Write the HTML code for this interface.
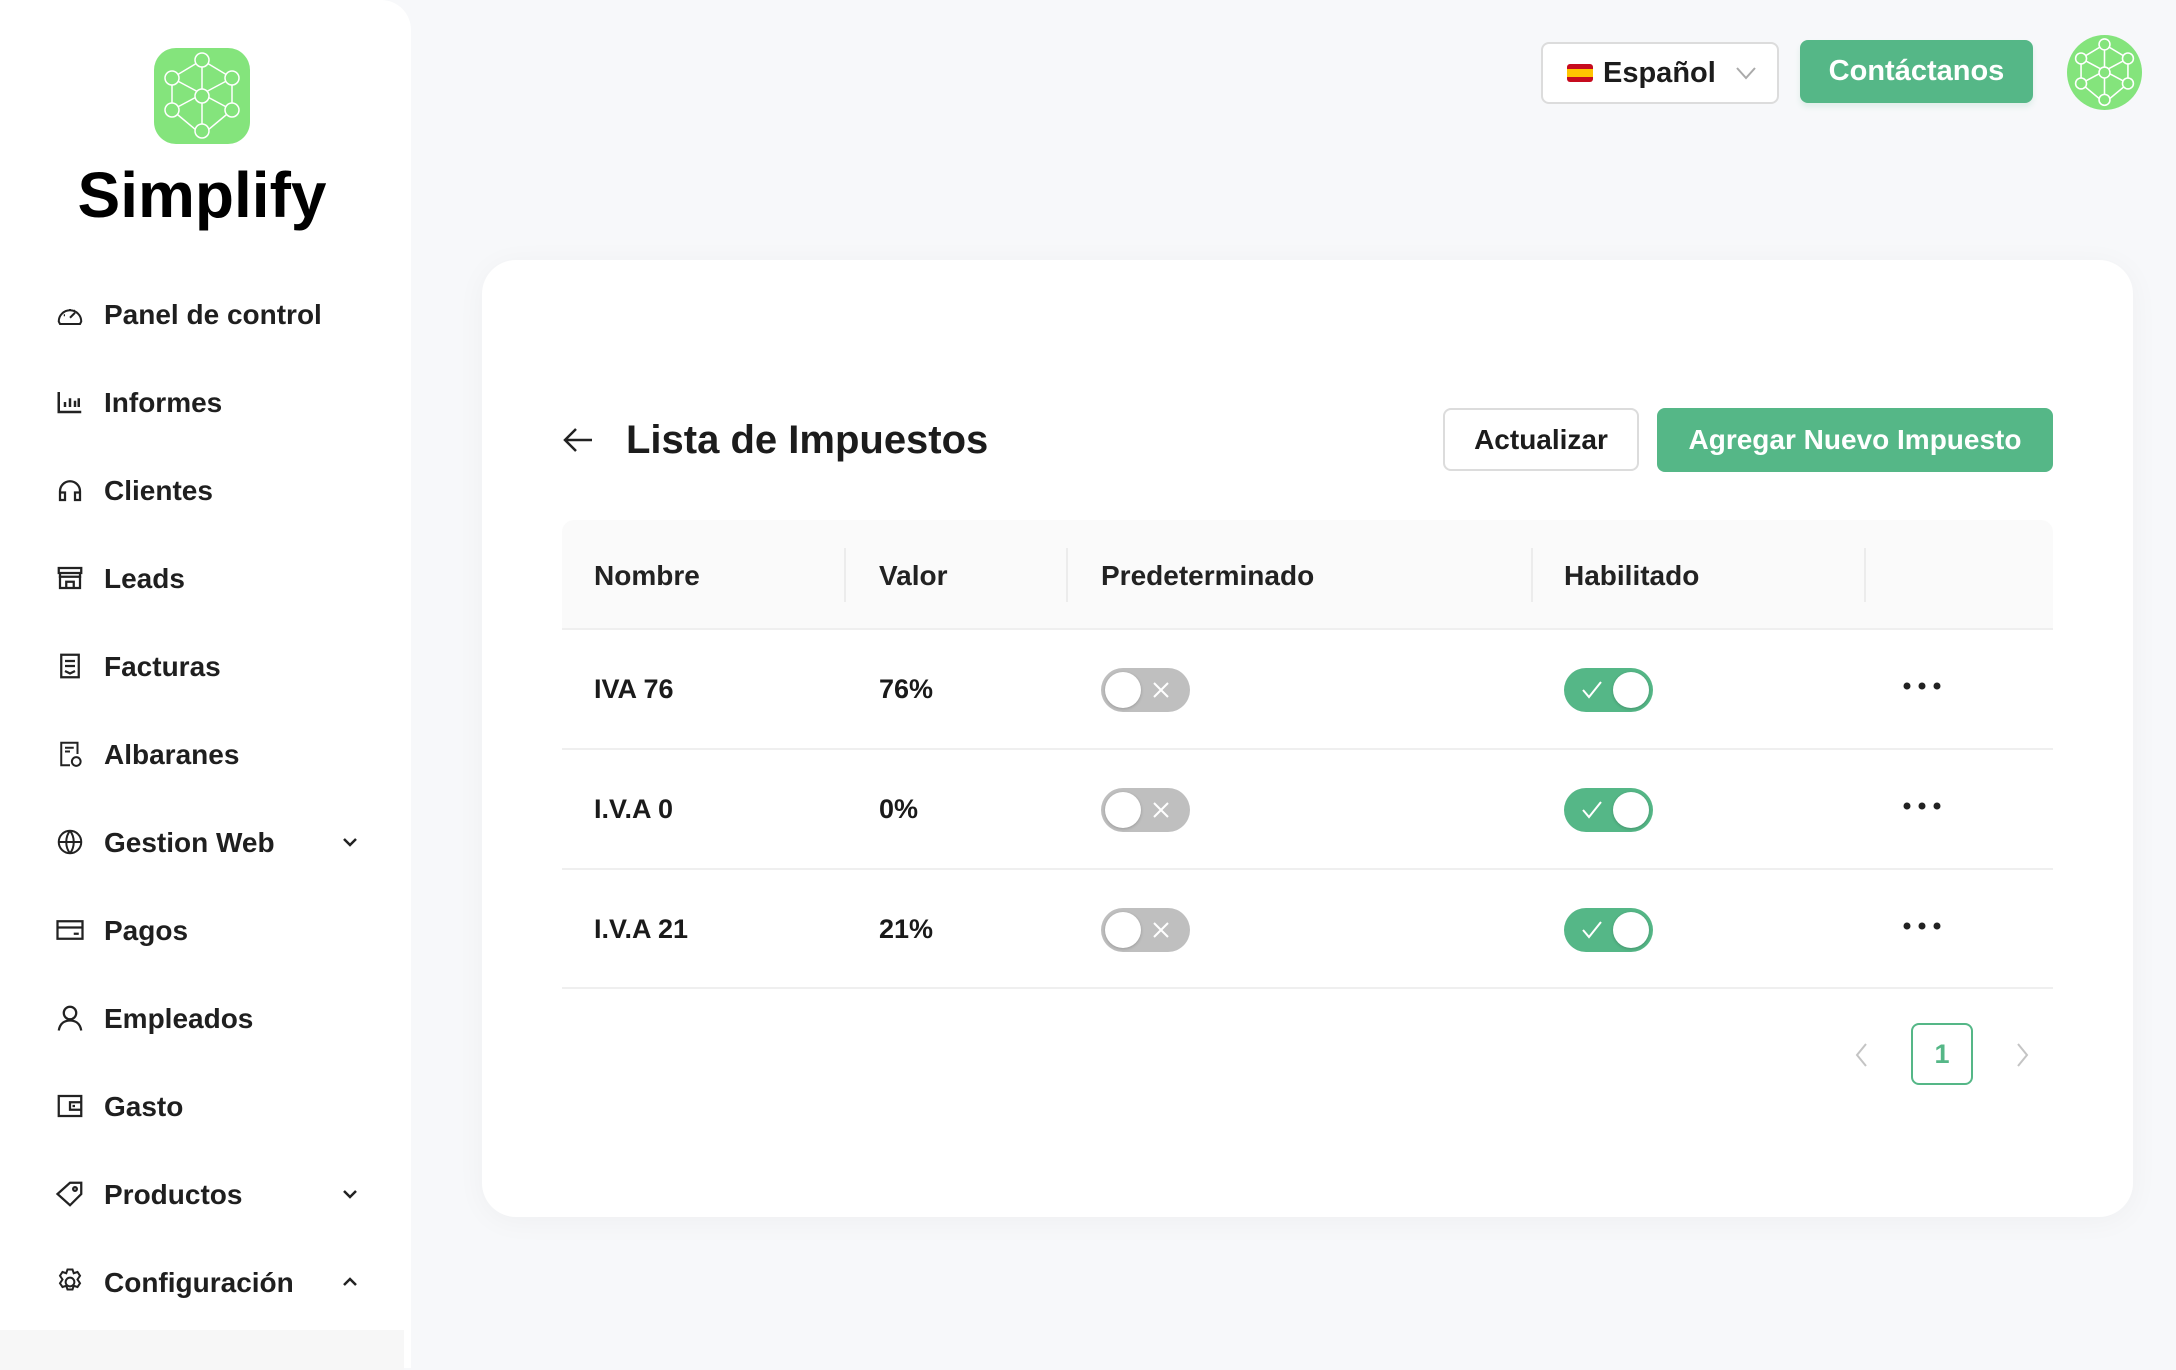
<!DOCTYPE html>
<html><head><meta charset="utf-8"><style>
*{margin:0;padding:0;box-sizing:border-box}
body{width:2176px;height:1368px;background:#f7f8fa;font-family:"Liberation Sans",Arial,sans-serif;color:#1c1c1c;position:relative;overflow:hidden}
.side{position:absolute;left:0;top:0;width:411px;height:1368px;background:#fff;border-top-right-radius:30px}
.logo{position:absolute;left:154px;top:48px;width:96px;height:96px;border-radius:22px;background:#84e47c}
.brand{position:absolute;left:0;width:404px;top:158px;text-align:center;font-weight:bold;font-size:64px;color:#000}
.nav{position:absolute;left:0;width:404px;height:60px;display:flex;align-items:center;font-weight:bold;font-size:28px;color:#1f1f1f}
.nav svg{position:absolute;left:55px;width:30px;height:30px}
.nav span{position:absolute;left:104px;top:15px}
.nav .chev{position:absolute;left:338px;width:24px;height:24px}
.sub{position:absolute;left:0;top:1330px;width:404px;height:40px;background:#f7f7f7}
.abs{position:absolute}
.card{position:absolute;left:482px;top:260px;width:1651px;height:957px;background:#fff;border-radius:34px;box-shadow:0 4px 30px rgba(0,0,0,.04)}
.btn{position:absolute;display:flex;align-items:center;justify-content:center;font-weight:bold;font-size:28px;border-radius:8px}
.th{position:absolute;top:560px;font-weight:bold;font-size:28px;color:#222}
.td{position:absolute;font-weight:bold;font-size:27px;color:#1a1a1a}
.sep{position:absolute;top:548px;width:2px;height:54px;background:#ececec}
.line{position:absolute;left:562px;width:1491px;height:2px;background:#efefef}
.tg{position:absolute;width:89px;height:44px;border-radius:22px}
.tg .k{position:absolute;top:4px;width:36px;height:36px;border-radius:50%;background:#fff;box-shadow:0 1px 3px rgba(0,0,0,.2)}
</style></head><body>
<div class="side">
 <div class="logo"><svg width="96" height="96" viewBox="0 0 96 96" fill="none" stroke="#fff" stroke-width="1.5"><path d="M48 12V87M18 30L78 62M78 30L18 62M48 12L78 30V62L48 87L18 62V30Z"/><g fill="#84e47c"><circle cx="48" cy="12" r="7"/><circle cx="18" cy="30" r="7"/><circle cx="78" cy="30" r="7"/><circle cx="48" cy="48" r="7"/><circle cx="18" cy="62" r="7"/><circle cx="78" cy="62" r="7"/><circle cx="48" cy="83" r="7"/></g></svg></div>
 <div class="brand">Simplify</div>
</div>
<div class="nav" style="top:284px"><svg viewBox="0 0 24 24" fill="none" stroke="#222" stroke-width="1.6"><path d="M3 18a9 9 0 1 1 18 0l-1 2H4z"/><path d="M12 15l4-4M7 13h1M12 8v1M16 9l-1 1"/></svg><span>Panel de control</span></div>
<div class="nav" style="top:372px"><svg viewBox="0 0 24 24" fill="none" stroke="#222" stroke-width="2"><path d="M3 4v16h18M8 16v-4M12 16v-7M16 16v-5M19 16v-7"/></svg><span>Informes</span></div>
<div class="nav" style="top:460px"><svg viewBox="0 0 24 24" fill="none" stroke="#222" stroke-width="1.8"><path d="M4 19v-6a8 8 0 0 1 16 0v6M4 14h4v6H4zM16 14h4v6h-4z"/></svg><span>Clientes</span></div>
<div class="nav" style="top:548px"><svg viewBox="0 0 24 24" fill="none" stroke="#222" stroke-width="1.8"><path d="M3 4h18v4H3zM4 8v12h16V8M9 20v-5h6v5M3 11h18"/></svg><span>Leads</span></div>
<div class="nav" style="top:636px"><svg viewBox="0 0 24 24" fill="none" stroke="#222" stroke-width="1.8"><path d="M5 3h14v18H5zM8 8h8M8 12h8M8 16l4 2 4-2"/></svg><span>Facturas</span></div>
<div class="nav" style="top:724px"><svg viewBox="0 0 24 24" fill="none" stroke="#222" stroke-width="1.6"><path d="M12 21H5V3h13v9M8 7h7M8 10h4"/><circle cx="17" cy="18" r="3.5"/></svg><span>Albaranes</span></div>
<div class="nav" style="top:812px"><svg viewBox="0 0 24 24" fill="none" stroke="#222" stroke-width="1.6"><circle cx="12" cy="12" r="9"/><path d="M3 12h18M12 3c-4 5-4 13 0 18M12 3c4 5 4 13 0 18"/></svg><span>Gestion Web</span><svg class="chev" viewBox="0 0 24 24" fill="none" stroke="#222" stroke-width="2.5"><path d="M6 9l6 6 6-6"/></svg></div>
<div class="nav" style="top:900px"><svg viewBox="0 0 24 24" fill="none" stroke="#222" stroke-width="1.8"><path d="M2 5h20v14H2zM2 10h20M15 15h4"/></svg><span>Pagos</span></div>
<div class="nav" style="top:988px"><svg viewBox="0 0 24 24" fill="none" stroke="#222" stroke-width="1.8"><circle cx="12" cy="8" r="5"/><path d="M3 22c1-6 5-8 9-8s8 2 9 8"/></svg><span>Empleados</span></div>
<div class="nav" style="top:1076px"><svg viewBox="0 0 24 24" fill="none" stroke="#222" stroke-width="1.8"><path d="M3 4h18v16H3zM12 9h9v6h-9zM14 12h2"/></svg><span>Gasto</span></div>
<div class="nav" style="top:1164px"><svg viewBox="0 0 24 24" fill="none" stroke="#222" stroke-width="1.8"><path d="M2 12L12 3h9v9l-9 9z"/><circle cx="16" cy="8" r="1.5"/></svg><span>Productos</span><svg class="chev" viewBox="0 0 24 24" fill="none" stroke="#222" stroke-width="2.5"><path d="M6 9l6 6 6-6"/></svg></div>
<div class="nav" style="top:1252px"><svg viewBox="0 0 24 24" fill="none" stroke="#222" stroke-width="1.6"><circle cx="12" cy="12" r="3.5"/><path d="M10 2h4l1 3 3-1 2 3-2 3 2 3-2 3-3-1-1 3h-4l-1-3-3 1-2-3 2-3-2-3 2-3 3 1z"/></svg><span>Configuración</span><svg class="chev" viewBox="0 0 24 24" fill="none" stroke="#222" stroke-width="2.5"><path d="M6 15l6-6 6 6"/></svg></div>
<div class="sub"></div>

<div class="abs" style="left:1541px;top:42px;width:238px;height:62px;border:2px solid #dcdcdc;border-radius:8px;background:#fff;display:flex;align-items:center;padding-left:24px;font-weight:bold;font-size:29px">
 <svg width="26" height="18" viewBox="0 0 26 18" style="margin-right:10px"><rect width="26" height="18" rx="3" fill="#c60b1e"/><rect y="5" width="26" height="8" fill="#ffc400"/></svg>Español
 <svg width="22" height="14" viewBox="0 0 22 14" style="position:absolute;right:20px" fill="none" stroke="#aaa" stroke-width="2"><path d="M2 2l9 10 9-10"/></svg></div>
<div class="btn" style="left:1800px;top:40px;width:233px;height:63px;background:#55b787;color:#fff;font-size:29px;box-shadow:0 4px 6px rgba(85,183,135,.15)">Contáctanos</div>
<div class="abs" style="left:2067px;top:35px;width:75px;height:75px;border-radius:50%;background:#84e47c"><svg width="75" height="75" viewBox="0 0 96 96" fill="none" stroke="#fff" stroke-width="2"><path d="M48 12V87M18 30L78 62M78 30L18 62M48 12L78 30V62L48 87L18 62V30Z"/><g fill="#84e47c"><circle cx="48" cy="12" r="7"/><circle cx="18" cy="30" r="7"/><circle cx="78" cy="30" r="7"/><circle cx="48" cy="48" r="7"/><circle cx="18" cy="62" r="7"/><circle cx="78" cy="62" r="7"/><circle cx="48" cy="83" r="7"/></g></svg></div>

<div class="card"></div>
<svg class="abs" style="left:562px;top:426px" width="32" height="28" viewBox="0 0 32 28" fill="none" stroke="#222" stroke-width="2.5"><path d="M30 14H3M14 3L3 14l11 11"/></svg>
<div class="abs" style="left:626px;top:418px;font-weight:bold;font-size:40px;color:#1c1c1c">Lista de Impuestos</div>
<div class="btn" style="left:1443px;top:408px;width:196px;height:63px;border:2px solid #dcdcdc;background:#fff;color:#1c1c1c">Actualizar</div>
<div class="btn" style="left:1657px;top:408px;width:396px;height:64px;background:#55b787;color:#fff">Agregar Nuevo Impuesto</div>

<div class="abs" style="left:562px;top:520px;width:1491px;height:109px;background:#fafafa;border-radius:12px 12px 0 0"></div>
<div class="line" style="top:628px"></div>
<div class="th" style="left:594px">Nombre</div>
<div class="th" style="left:879px">Valor</div>
<div class="th" style="left:1101px">Predeterminado</div>
<div class="th" style="left:1564px">Habilitado</div>
<div class="sep" style="left:844px"></div><div class="sep" style="left:1066px"></div><div class="sep" style="left:1531px"></div><div class="sep" style="left:1864px"></div>

<div class="td" style="left:594px;top:674px">IVA 76</div><div class="td" style="left:879px;top:674px">76%</div>
<div class="td" style="left:594px;top:794px">I.V.A 0</div><div class="td" style="left:879px;top:794px">0%</div>
<div class="td" style="left:594px;top:914px">I.V.A 21</div><div class="td" style="left:879px;top:914px">21%</div>
<div class="line" style="top:748px"></div><div class="line" style="top:868px"></div><div class="line" style="top:987px"></div>

<div class="tg" style="left:1101px;top:668px;background:#bfbfbf"><div class="k" style="left:4px"></div><svg class="abs" style="left:50px;top:12px" width="20" height="20" fill="none" stroke="#fff" stroke-width="2"><path d="M3 3l14 14M17 3L3 17"/></svg></div>
<div class="tg" style="left:1101px;top:788px;background:#bfbfbf"><div class="k" style="left:4px"></div><svg class="abs" style="left:50px;top:12px" width="20" height="20" fill="none" stroke="#fff" stroke-width="2"><path d="M3 3l14 14M17 3L3 17"/></svg></div>
<div class="tg" style="left:1101px;top:908px;background:#bfbfbf"><div class="k" style="left:4px"></div><svg class="abs" style="left:50px;top:12px" width="20" height="20" fill="none" stroke="#fff" stroke-width="2"><path d="M3 3l14 14M17 3L3 17"/></svg></div>
<div class="tg" style="left:1564px;top:668px;background:#55b787"><div class="k" style="left:49px"></div><svg class="abs" style="left:17px;top:12px" width="22" height="20" fill="none" stroke="#fff" stroke-width="2"><path d="M2 10l6 7L20 2"/></svg></div>
<div class="tg" style="left:1564px;top:788px;background:#55b787"><div class="k" style="left:49px"></div><svg class="abs" style="left:17px;top:12px" width="22" height="20" fill="none" stroke="#fff" stroke-width="2"><path d="M2 10l6 7L20 2"/></svg></div>
<div class="tg" style="left:1564px;top:908px;background:#55b787"><div class="k" style="left:49px"></div><svg class="abs" style="left:17px;top:12px" width="22" height="20" fill="none" stroke="#fff" stroke-width="2"><path d="M2 10l6 7L20 2"/></svg></div>

<svg class="abs" style="left:1902px;top:681px" width="40" height="10"><circle cx="5" cy="5" r="3.5" fill="#222"/><circle cx="20" cy="5" r="3.5" fill="#222"/><circle cx="35" cy="5" r="3.5" fill="#222"/></svg>
<svg class="abs" style="left:1902px;top:801px" width="40" height="10"><circle cx="5" cy="5" r="3.5" fill="#222"/><circle cx="20" cy="5" r="3.5" fill="#222"/><circle cx="35" cy="5" r="3.5" fill="#222"/></svg>
<svg class="abs" style="left:1902px;top:921px" width="40" height="10"><circle cx="5" cy="5" r="3.5" fill="#222"/><circle cx="20" cy="5" r="3.5" fill="#222"/><circle cx="35" cy="5" r="3.5" fill="#222"/></svg>

<svg class="abs" style="left:1852px;top:1042px" width="20" height="26" fill="none" stroke="#c4c4c4" stroke-width="2"><path d="M14 2L5 13l9 11"/></svg>
<div class="abs" style="left:1911px;top:1023px;width:62px;height:62px;border:2px solid #55b787;border-radius:8px;display:flex;align-items:center;justify-content:center;color:#55b787;font-weight:bold;font-size:27px">1</div>
<svg class="abs" style="left:2012px;top:1042px" width="20" height="26" fill="none" stroke="#c4c4c4" stroke-width="2"><path d="M6 2l9 11-9 11"/></svg>
</body></html>
